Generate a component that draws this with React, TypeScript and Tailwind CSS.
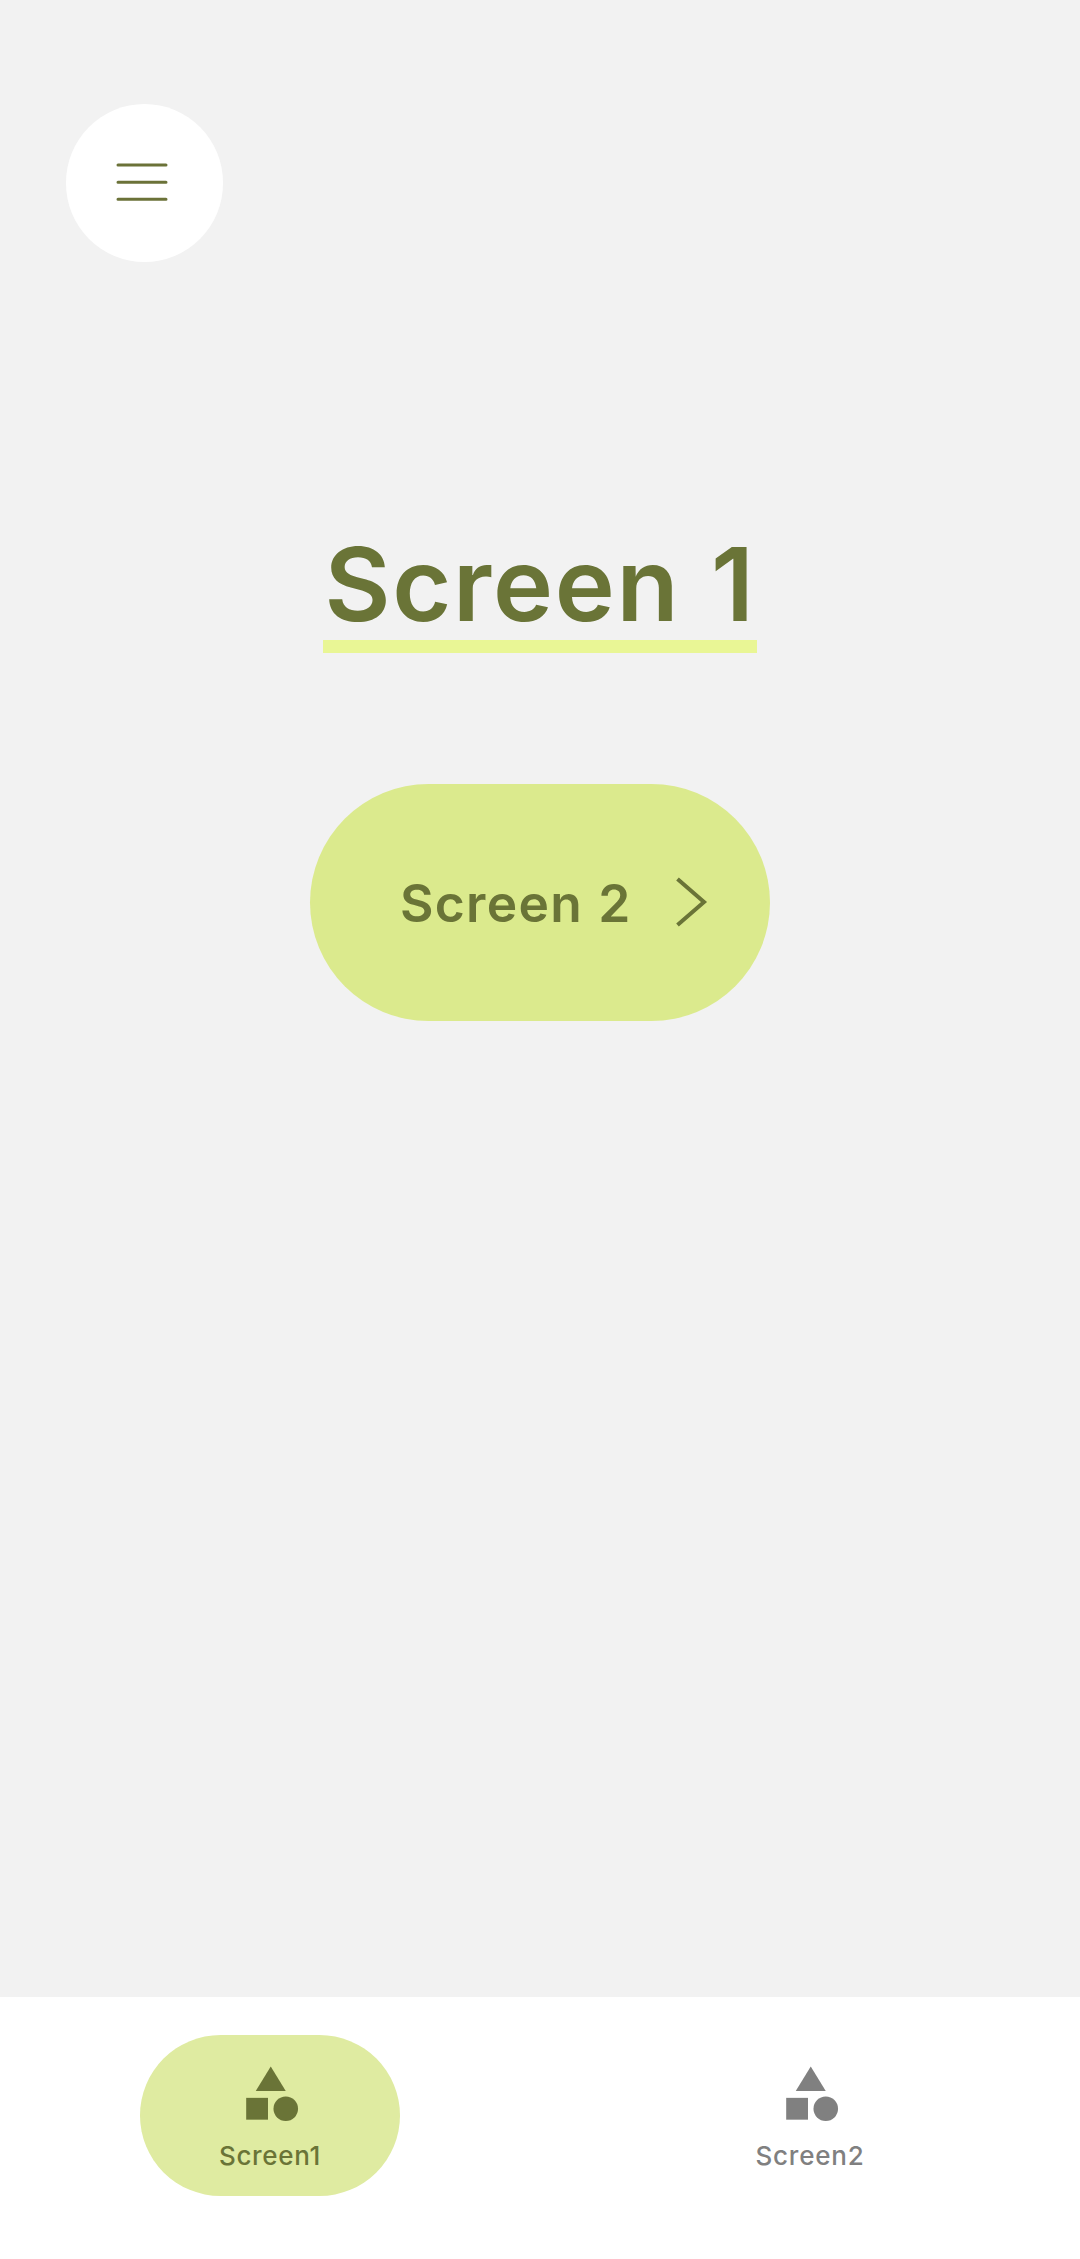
function MenuIcon() {
  return (
    <svg width="52" height="40" viewBox="0 0 52 40" fill="none" stroke="#6b7238" strokeWidth="3" strokeLinecap="round">
      <path d="M2 3H50M2 20.2H50M2 37.3H50" />
    </svg>
  );
}

function ShapesIcon() {
  return (
    <svg className="ml-[1.5px]" width="65.5" height="65.5" viewBox="0 0 24 24" fill="currentColor">
      <path d="M12 2 6.5 11h11z" />
      <circle cx="17.5" cy="17.5" r="4.5" />
      <path d="M3 13.5h8v8H3z" />
    </svg>
  );
}

export default function App() {
  return (
    <div className="flex h-[2259px] w-[1080px] flex-col overflow-hidden bg-[#f2f2f2] font-['Inter',sans-serif] text-[#6a7437]">
      <header className="pt-[104px] pl-[66px]">
        <button className="flex h-[158px] w-[157px] items-center justify-center rounded-full bg-white pr-[5px] pb-[2px]">
          <MenuIcon />
        </button>
      </header>

      <main className="flex flex-1 flex-col items-center pt-[263px]">
        <h1 className="flex h-[128px] w-[434px] justify-center border-b-[13px] border-[#e9f695] text-[101.5px] leading-[119px] font-[580] whitespace-nowrap">
          <span className="tracking-[1.8px] [word-spacing:3px]">Screen 1</span>
        </h1>
        <button className="mt-[131px] flex h-[237px] w-[460px] items-center rounded-full bg-[#dbea8d] pl-[90px] text-[51.5px] leading-[60px] font-[560]">
          <span className="w-[276px] text-left tracking-[1.3px] whitespace-nowrap [word-spacing:1px]">Screen 2</span>
          <svg className="-mt-[1px]" width="32" height="52" viewBox="0 0 32 52" fill="none" stroke="currentColor" strokeWidth="4">
            <path d="M1.5 3 28 26 1.5 49" />
          </svg>
        </button>
      </main>

      <nav className="grid h-[262px] grid-cols-2 justify-items-center bg-white pt-[38px]">
        <button className="flex h-[161px] w-[260px] flex-col items-center rounded-full bg-[#dfeba1] pt-[26px]">
          <ShapesIcon />
          <span className="mt-[3px] text-[26px] leading-[52px] font-[550] tracking-[0.7px]">Screen1</span>
        </button>
        <button className="flex h-[161px] w-[260px] flex-col items-center pt-[26px] text-[#808080]">
          <ShapesIcon />
          <span className="mt-[3px] text-[26px] leading-[52px] font-[550] tracking-[0.8px]">Screen2</span>
        </button>
      </nav>
    </div>
  );
}
